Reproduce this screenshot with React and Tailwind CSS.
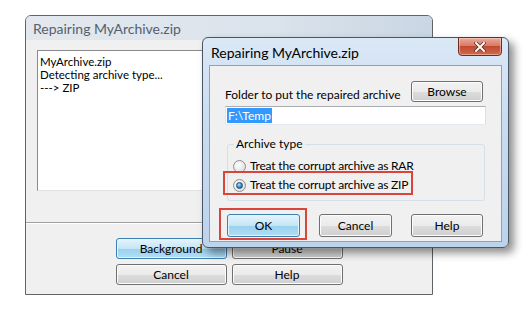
import React from 'react';

const FONT = { fontFamily: 'Lato, "Noto Sans", sans-serif' };

function WinButton({ children, primary, className = '' }) {
  return (
    <div
      className={`flex items-center justify-center rounded-[3px] border text-[12px] text-black ${
        primary
          ? 'border-[#3c7fb1] bg-[linear-gradient(#e5f4fc_0%,#c4e5f6_50%,#98d1ef_51%,#b3ddf3_100%)] shadow-[inset_0_0_0_1px_#e4f4fc]'
          : 'border-[#707070] bg-[linear-gradient(#f2f2f2_0%,#ebebeb_50%,#dddddd_51%,#cfcfcf_100%)] shadow-[inset_0_0_0_1px_#fcfcfc]'
      } ${className}`}
    >
      {children}
    </div>
  );
}

function Radio({ checked }) {
  return (
    <div className="flex h-[13px] w-[13px] shrink-0 items-center justify-center rounded-full border border-[#8e8f8f] bg-[radial-gradient(circle_at_40%_40%,#ffffff,#d6d6d6)]">
      {checked && (
        <div className="h-[7px] w-[7px] rounded-full border border-[#1a4f78] bg-[radial-gradient(circle_at_40%_35%,#b8e4ff,#2f7fc0_60%,#164c7a)]" />
      )}
    </div>
  );
}

function BackWindow() {
  return (
    <div className="absolute left-[25px] top-[15px] flex h-[280px] w-[408px] flex-col overflow-hidden rounded-t-[6px] border border-[#5f6468] bg-[#f0f0f0]">
      {/* title bar */}
      <div className="flex h-[24px] items-center bg-[linear-gradient(90deg,#e3e8ee,#dbe3ec_60%,#c9d6e3)] pl-[7px] text-[14px] text-[#56606b]">
        Repairing MyArchive.zip
      </div>
      {/* log box */}
      <div className="mx-[11px] mt-[10px] h-[141px] border border-t-[#8a8a8a] border-l-[#8a8a8a] border-r-[#e3e3e3] border-b-[#e3e3e3] bg-white px-[2px] pt-[4px] text-[11.5px] leading-[13px] text-black">
        <div>MyArchive.zip</div>
        <div>Detecting archive type...</div>
        <div>---&gt; ZIP</div>
      </div>
      <div className="mt-[31px] border-t border-t-[#a0a0a0] border-b border-b-white" />
      <div className="mt-[14px] flex flex-col items-center gap-[5px]">
        <div className="flex gap-[5px]">
          <WinButton primary className="h-[21px] w-[111px]">Background</WinButton>
          <WinButton className="h-[21px] w-[111px]">Pause</WinButton>
        </div>
        <div className="flex gap-[5px]">
          <WinButton className="h-[21px] w-[111px]">Cancel</WinButton>
          <WinButton className="h-[21px] w-[111px]">Help</WinButton>
        </div>
      </div>
    </div>
  );
}

function FrontDialog() {
  return (
    <div className="absolute left-[202px] top-[37px] flex h-[211px] w-[307px] flex-col rounded-[6px] border border-[#4a5666] bg-[linear-gradient(#dbe8f6,#c9dcf0_40%,#bcd3ec)] px-[6px] pb-[5px] shadow-[5px_5px_9px_rgba(0,0,0,0.45)]">
      {/* title bar */}
      <div className="flex h-[27px] items-start justify-between">
        <div className="pl-[2px] pt-[4px] text-[14px] text-black">Repairing MyArchive.zip</div>
        <div className="-mt-px flex h-[19px] w-[44px] items-center justify-center rounded-b-[4px] border border-[#6e2a1f] bg-[linear-gradient(#ecaa9b,#d77b66_45%,#c14a32_50%,#cf6a4f)] shadow-[inset_0_0_0_1px_rgba(255,220,210,0.5)]">
          <svg width="12" height="10" viewBox="0 0 12 10">
            <path d="M2 1 L10 9 M10 1 L2 9" stroke="#5a2a22" strokeWidth="3.4" strokeLinecap="square" />
            <path d="M2 1 L10 9 M10 1 L2 9" stroke="#ffffff" strokeWidth="2" strokeLinecap="square" />
          </svg>
        </div>
      </div>
      {/* client area */}
      <div className="relative flex-1 border border-[#8aa3bd] bg-[#f0f0f0] px-[15px] pt-[15px] text-[12px] text-black">
        <div className="flex items-end justify-between pr-[3px]">
          <div className="whitespace-nowrap leading-[14px]">Folder to put the repaired archive</div>
          <WinButton className="h-[21px] w-[72px]">Browse</WinButton>
        </div>
        <div className="mt-[4px] flex h-[19px] items-center border border-[#abadb3] border-l-[#e2e3ea] border-r-[#dbdfe6] border-b-[#e3e9ef] bg-white px-px">
          <span className="bg-[#3399ff] px-px leading-[15px] text-white">F:\Temp</span>
        </div>
        {/* group box */}
        <div className="relative ml-[2px] mr-[1px] mt-[19px] h-[57px] rounded-[3px] border border-[#d5dfe5]">
          <div className="absolute -top-[9px] left-[6px] bg-[#f0f0f0] px-[2px] leading-[16px]">Archive type</div>
          <div className="flex flex-col gap-[5px] pl-[5px] pt-[14px]">
            <div className="flex items-center gap-[4px]">
              <Radio />
              <span className="whitespace-nowrap leading-[14px] tracking-[-0.2px]">Treat the corrupt archive as RAR</span>
            </div>
            <div className="flex items-center gap-[4px]">
              <Radio checked />
              <span className="whitespace-nowrap leading-[14px] tracking-[-0.2px]">Treat the corrupt archive as ZIP</span>
            </div>
          </div>
        </div>
        <div className="mt-[13px] flex justify-between pl-[2px] pr-[3px]">
          <WinButton primary className="h-[23px] w-[73px]">OK</WinButton>
          <WinButton className="h-[23px] w-[73px]">Cancel</WinButton>
          <WinButton className="h-[23px] w-[72px]">Help</WinButton>
        </div>
        {/* highlight marks */}
        <div className="absolute left-[13px] top-[105px] h-[24px] w-[190px] border-2 border-[#d9443c]" />
        <div className="absolute left-[9px] top-[142px] h-[32px] w-[88px] border-2 border-[#d9443c]" />
      </div>
    </div>
  );
}

export default function App() {
  return (
    <div className="relative h-[312px] w-[532px] overflow-hidden bg-white" style={FONT}>
      <BackWindow />
      <FrontDialog />
    </div>
  );
}
